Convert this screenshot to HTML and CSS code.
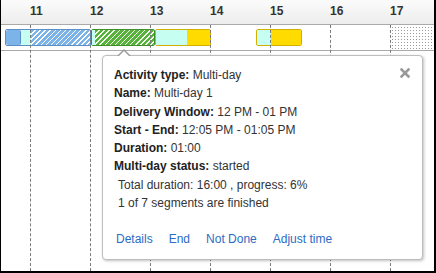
FILE: index.html
```html
<!DOCTYPE html>
<html lang="en">
<head>
    <meta charset="UTF-8">
    <title>Schedule</title>
    <link rel="stylesheet" href="styles.css">
</head>
<body>
    <div class="frame">
        <div class="header">
            <div class="hour">11</div>
            <div class="hour">12</div>
            <div class="hour">13</div>
            <div class="hour">14</div>
            <div class="hour">15</div>
            <div class="hour">16</div>
            <div class="hour">17</div>
        </div>
        <div class="row">
            <div class="bar bar-blue">
                <div class="seg solid"></div>
                <div class="seg cyan w9"></div>
                <div class="seg hatch-blue"></div>
            </div>
            <div class="bar bar-green">
                <div class="seg cyan w3"></div>
                <div class="seg hatch-green"></div>
            </div>
            <div class="bar bar-yellow first">
                <div class="seg cyan w30"></div>
                <div class="seg yellow"></div>
            </div>
            <div class="bar bar-yellow second">
                <div class="seg cyan w13"></div>
                <div class="seg yellow"></div>
            </div>
            <div class="closed"></div>
        </div>
        <div class="grid">
            <div class="line"></div>
            <div class="line"></div>
            <div class="line"></div>
            <div class="line"></div>
            <div class="line"></div>
            <div class="line"></div>
            <div class="line"></div>
        </div>

        <div class="tooltip">
            <div class="close">
                <svg width="10" height="10" viewBox="0 0 10 10">
                    <path d="M1.5 1.5 L8.5 8.5 M8.5 1.5 L1.5 8.5" stroke="#9a9a9a" stroke-width="2.6" stroke-linecap="square"/>
                </svg>
            </div>
            <div class="info"><b>Activity type:</b> Multi-day</div>
            <div class="info"><b>Name:</b> Multi-day 1</div>
            <div class="info"><b>Delivery Window:</b> 12 PM - 01 PM</div>
            <div class="info"><b>Start - End:</b> 12:05 PM - 01:05 PM</div>
            <div class="info"><b>Duration:</b> 01:00</div>
            <div class="info"><b>Multi-day status:</b> started</div>
            <div class="info note">Total duration: 16:00 , progress: 6%</div>
            <div class="info note">1 of 7 segments are finished</div>
            <div class="actions">
                <a href="#">Details</a>
                <a href="#">End</a>
                <a href="#">Not Done</a>
                <a href="#">Adjust time</a>
            </div>
        </div>
    </div>
</body>
</html>
```

FILE: styles.css
```css
* { box-sizing: border-box; }
body {
    margin: 0;
    font-family: 'Liberation Sans', Arial, sans-serif;
    background: #fff;
    color: #333;
}
.frame {
    position: relative;
    width: 436px;
    height: 273px;
    border-left: 1px solid #000;
    border-right: 2px solid #000;
    border-bottom: 2px solid #000;
    overflow: hidden;
    background: #fff;
}
.header {
    display: flex;
    height: 25px;
    padding-left: 29px;
    background: linear-gradient(#fbfbfb, #ededed);
    border-bottom: 1px solid #aaa;
}
.hour {
    flex: 0 0 60px;
    font-size: 12px;
    font-weight: bold;
    line-height: 22px;
    color: #333;
}
.row {
    position: relative;
    height: 26px;
    border-bottom: 1px solid #aaa;
}
.bar {
    position: absolute;
    top: 4px;
    height: 17px;
    display: flex;
    border: 1px solid;
    border-radius: 2px;
    overflow: hidden;
}
.bar-blue { left: 4px; width: 86px; border-color: #5b8fc9; }
.bar-green { left: 90px; width: 64px; border-color: #3f8f2a; }
.bar-yellow { border-color: #d2b000; }
.bar-yellow.first { left: 154px; width: 56px; }
.bar-yellow.second { left: 255px; width: 46px; }
.seg { height: 100%; }
.solid {
    width: 15px;
    background: #7cb4ea;
    border-right: 1px solid #5b8fc9;
    border-radius: 2px;
}
.cyan { background: #c6fff2; }
.w3 { width: 3px; }
.w9 { width: 10px; }
.w13 { width: 14px; }
.w30 { width: 31px; }
.hatch-blue {
    flex: 1;
    background: repeating-linear-gradient(135deg, #7cb4ea 0 2.6px, #fff 2.6px 3.6px);
}
.hatch-green {
    flex: 1;
    background: repeating-linear-gradient(135deg, #58b13c 0 2.6px, #f2faee 2.6px 3.6px);
}
.yellow { flex: 1; background: #ffdb00; }
.closed {
    position: absolute;
    left: 390px;
    right: 0;
    top: 0;
    bottom: 0;
    background: radial-gradient(circle, #9a9a9a 0.6px, transparent 0.9px) 0 1px / 3px 3px;
}
.grid {
    position: absolute;
    top: 25px;
    left: 0;
    right: 0;
    bottom: 0;
    display: flex;
    padding-left: 29px;
    pointer-events: none;
}
.line {
    flex: 0 0 60px;
    border-left: 1px dashed #7a7a7a;
}
.tooltip {
    position: absolute;
    left: 101px;
    top: 55px;
    width: 321px;
    height: 205px;
    padding: 10px 11px;
    background: #fff;
    border: 1px solid #bdbdbd;
    border-radius: 4px;
    box-shadow: 1px 1px 3px rgba(0, 0, 0, 0.25);
    z-index: 2;
}
.tooltip::before,
.tooltip::after {
    content: '';
    position: absolute;
    left: 14px;
    width: 0;
    height: 0;
    border-style: solid;
    border-color: transparent;
}
.tooltip::before {
    top: -7px;
    border-width: 0 7px 7px 7px;
    border-bottom-color: #9a9a9a;
}
.tooltip::after {
    top: -5px;
    left: 15px;
    border-width: 0 6px 6px 6px;
    border-bottom-color: #fff;
}
.close {
    position: absolute;
    top: 12px;
    right: 12px;
    width: 10px;
    height: 10px;
    display: flex;
}
.info {
    font-size: 12px;
    line-height: 18.3px;
    color: #333;
}
.info b { color: #222; }
.note { padding-left: 4px; }
.actions {
    display: flex;
    gap: 16px;
    margin-top: 18px;
    padding-left: 2px;
    font-size: 12px;
    line-height: 18px;
}
.actions a {
    color: #2d6cc4;
    text-decoration: none;
}
```
